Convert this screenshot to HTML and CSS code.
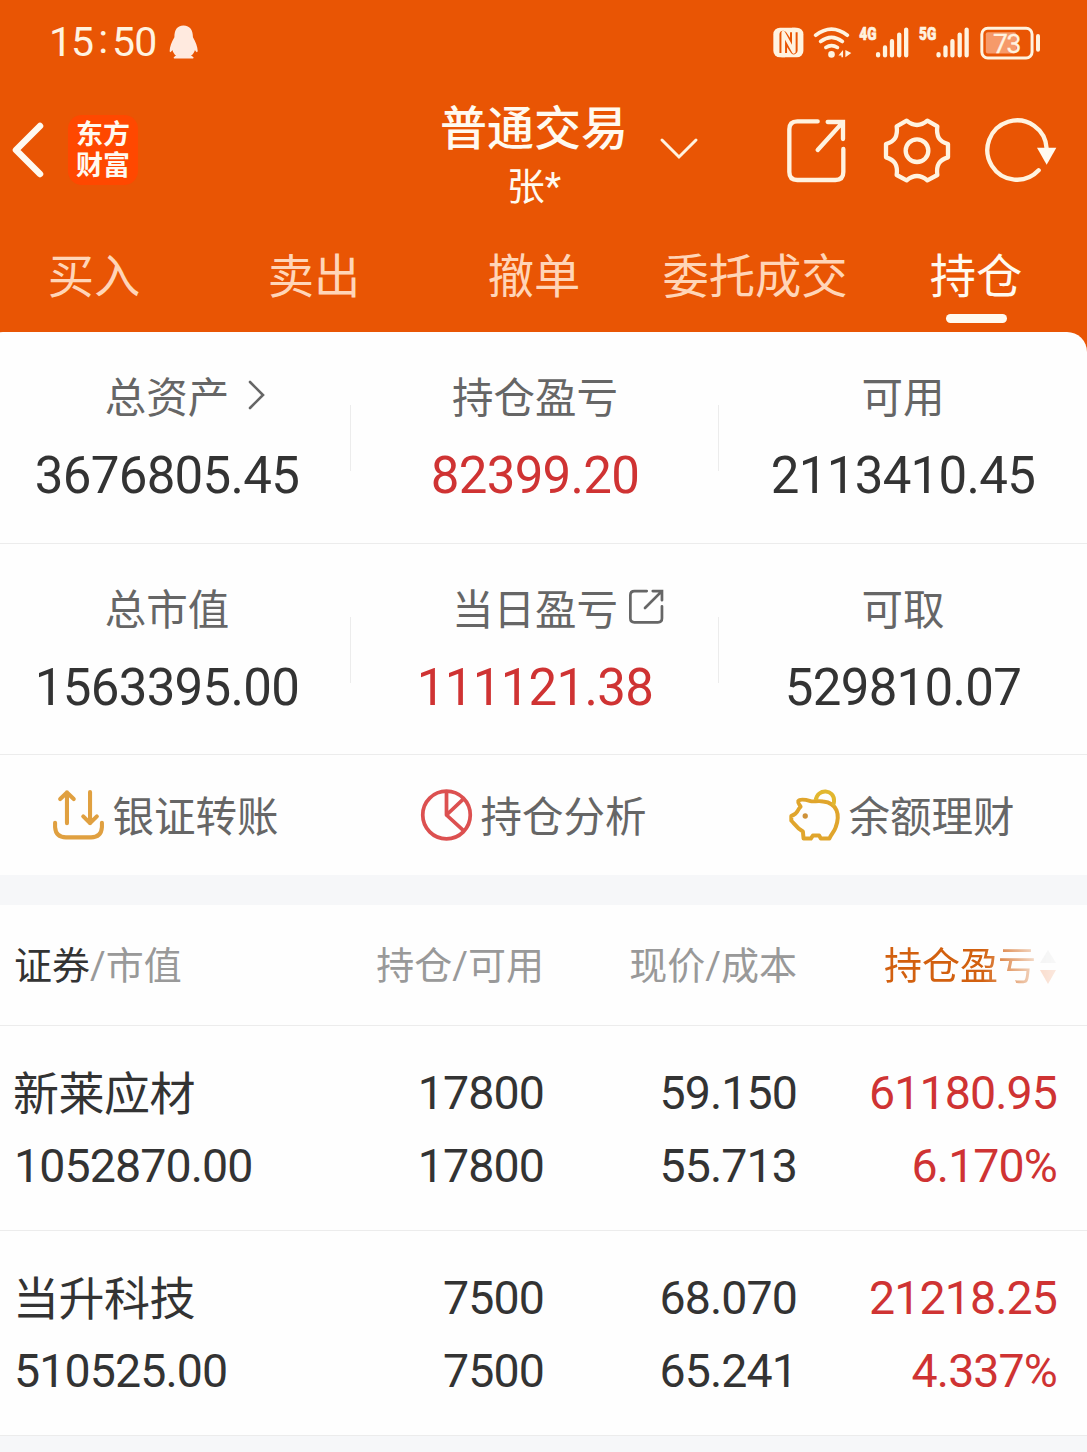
FILE: index.html
```html
<!DOCTYPE html>
<html lang="zh-CN">

<head>
    <meta charset="UTF-8">
    <meta name="viewport" content="width=device-width, initial-scale=1.0">
    <title>普通交易 - 持仓</title>
    <link rel="stylesheet" href="styles.css">
</head>

<body>

    <header class="header">
        <!-- 状态栏 -->
        <div class="status-bar">
            <span class="time">15<span class="colon">:</span>50</span>
            <svg class="qq" viewBox="506 76 86 100" fill="#ffeadf">
                <path d="M549 77C529 77 522 92 522 112C514 126 508 141 508 152C508 158 511 158 516 150C518 158 522 163 527 167C520 169 518 175 522 175H577C581 175 579 169 571 167C577 163 581 158 583 150C587 158 591 158 591 152C591 141 585 126 577 112C577 92 569 77 549 77Z"/>
            </svg>
            <svg class="status-icons" viewBox="90 70 820 115" fill="none" stroke="#fff3e0" stroke-linecap="round">
                <rect x="97" y="81" width="91" height="90" rx="20" fill="#fff3e0" stroke="none"/>
                <path d="M127 158V102L159 150V95" stroke="#e95504" stroke-width="23" stroke-linecap="butt" stroke-linejoin="round"/>
                <path d="M127 171V96L159 154V81" stroke-width="11" stroke-linecap="butt" stroke-linejoin="round"/>
                <g stroke-width="11">
                    <path d="M225 104Q273 67 321 104"/>
                    <path d="M240 123Q273 98 306 123"/>
                    <path d="M256 141Q273 130 291 141"/>
                </g>
                <circle cx="273" cy="162" r="10" fill="#fff3e0" stroke="none"/>
                <path d="M294 165L308 149V171H303V165ZM315 149V171L333 158Z" fill="#fff3e0" stroke="none"/>
                <g stroke-width="13">
                    <path d="M414 161V165M435 141V165M456 122V165M478 102V165M499 87V165"/>
                    <path d="M597 161V165M618 141V165M639 122V165M661 102V165M682 87V165"/>
                </g>
                <g class="net" fill="#fff3e0" stroke-width="2">
                    <text x="357" y="119" textLength="52" lengthAdjust="spacingAndGlyphs">4G</text>
                    <text x="538" y="119" textLength="52" lengthAdjust="spacingAndGlyphs">5G</text>
                </g>
                <rect x="728" y="83" width="152" height="90" rx="18" stroke-width="9"/>
                <rect x="740" y="95" width="92" height="64" rx="6" fill="#f69a6a" stroke="none"/>
                <path d="M898 106V148" stroke-width="12"/>
                <text class="battery" x="762" y="157" fill="#fff3e0" stroke-width="1">73</text>
            </svg>
        </div>

        <!-- 标题栏 -->
        <div class="title-bar">
            <svg class="back" viewBox="0 0 36 60" fill="none" stroke="#fffaf0" stroke-width="6.5" stroke-linecap="round" stroke-linejoin="round">
                <path d="M30 6L6 30L30 54"/>
            </svg>
            <div class="logo">东方<br>财富</div>
            <div class="account">
                <div class="account-type">普通交易</div>
                <div class="account-name">张*</div>
            </div>
            <svg class="down" viewBox="0 0 40 26" fill="none" stroke="#fff3e0" stroke-width="3" stroke-linecap="round">
                <path d="M3 3L20 20L37 3"/>
            </svg>
            <svg class="tool share" viewBox="80 81 183 201" fill="none" stroke="#fff3e0" stroke-width="13" stroke-linecap="round">
                <path d="M175 94H114Q90 94 90 118V246Q90 270 114 270H228Q252 270 252 246V177M205 96H251V147M250 97L175 180"/>
            </svg>
            <svg class="tool gear" viewBox="368 79 210 201" fill="none" stroke="#fff3e0" stroke-width="13" stroke-linejoin="round">
                <path d="M442 90Q473 116 504 90L534 107C530 138 540 152 566 160V200C540 208 530 222 534 253L504 269Q473 243 442 269L412 253C416 222 406 208 380 200V160C406 152 416 138 412 107Z"/>
                <circle cx="473" cy="180" r="34"/>
            </svg>
            <svg class="tool refresh" viewBox="674 79 222 201" fill="none" stroke="#fff3e0" stroke-width="13" stroke-linecap="round">
                <path d="M862 174A89 89 0 1 0 838 239"/>
                <path d="M833 171H891L862 222Z" fill="#fffaf0" stroke="none"/>
            </svg>
        </div>

        <!-- 导航标签 -->
        <nav class="tabs">
            <a class="tab">买入</a>
            <a class="tab">卖出</a>
            <a class="tab">撤单</a>
            <a class="tab tab-wide">委托成交</a>
            <a class="tab active">持仓</a>
        </nav>
    </header>

    <!-- 资产概览 -->
    <section class="summary">
        <div class="stat-row">
            <div class="stat">
                <div class="label">总资产
                    <svg class="arrow" viewBox="0 0 20 32" fill="none" stroke="#666" stroke-width="2.6" stroke-linecap="round">
                        <path d="M3 3L16 16L3 29"/>
                    </svg>
                </div>
                <div class="value">3676805.45</div>
            </div>
            <div class="stat">
                <div class="label">持仓盈亏</div>
                <div class="value red">82399.20</div>
            </div>
            <div class="stat">
                <div class="label">可用</div>
                <div class="value">2113410.45</div>
            </div>
        </div>
        <div class="stat-row">
            <div class="stat">
                <div class="label">总市值</div>
                <div class="value">1563395.00</div>
            </div>
            <div class="stat">
                <div class="label">当日盈亏
                    <svg class="export" viewBox="82 88 106 106" fill="none" stroke="#666" stroke-width="8" stroke-linecap="round">
                        <path d="M137 94H101Q89 94 89 106V174Q89 186 101 186H170Q182 186 182 174V139M155 94H182V121M181 95L132 144"/>
                    </svg>
                </div>
                <div class="value red">111121.38</div>
            </div>
            <div class="stat">
                <div class="label">可取</div>
                <div class="value">529810.07</div>
            </div>
        </div>
        <div class="actions">
            <a class="action">
                <svg viewBox="147 53 162 158" fill="none" stroke="#e0a040" stroke-width="12" stroke-linecap="round" stroke-linejoin="round">
                    <path d="M194 156V65M174 85L194 66L214 85M262 64V156M242 136L262 156L282 136M159 155V168Q161 198 191 198H265Q295 198 297 168V155"/>
                </svg>
                银证转账
            </a>
            <a class="action">
                <svg viewBox="1216 53 162 162" fill="none" stroke="#dc5050" stroke-width="11">
                    <circle cx="1297" cy="134" r="70"/>
                    <path d="M1297 64V134L1348 86M1297 134L1348 181" stroke-linejoin="round"/>
                </svg>
                持仓分析
            </a>
            <a class="action">
                <svg viewBox="559 679 166 168" fill="none" stroke="#e0a52c" stroke-width="12" stroke-linejoin="round">
                    <path d="M572 766V780C582 789 585 800 607 813L609 834H631L637 825H656L661 834H687C693 820 702 813 706 800C720 762 711 727 668 722C650 719 640 724 630 721C612 716 598 714 593 721C591 728 599 734 600 738C588 748 595 759 572 766Z"/>
                    <path d="M646 718C650 682 703 684 701 722Q701 729 697 734" stroke="#e2b72f"/>
                    <circle cx="614" cy="766" r="8" fill="#cf9238" stroke="none"/>
                </svg>
                余额理财
            </a>
        </div>
    </section>

    <!-- 持仓列表 -->
    <section class="holdings">
        <div class="row head">
            <div><b>证券</b>/市值</div>
            <div>持仓/可用</div>
            <div>现价/成本</div>
            <div class="sort">持仓盈亏
                <svg viewBox="0 0 18 34">
                    <path d="M1 13L9 0L17 13Z" fill="#ccc"/>
                    <path d="M1 20H17L9 34Z" fill="#e95504"/>
                </svg>
            </div>
        </div>
        <div class="row">
            <div><span class="name">新莱应材</span><br>1052870.00</div>
            <div>17800<br>17800</div>
            <div>59.150<br>55.713</div>
            <div class="red">61180.95<br>6.170%</div>
        </div>
        <div class="row">
            <div><span class="name">当升科技</span><br>510525.00</div>
            <div>7500<br>7500</div>
            <div>68.070<br>65.241</div>
            <div class="red">21218.25<br>4.337%</div>
        </div>
    </section>

</body>

</html>
```
FILE: styles.css
```css
/* 通用样式 */
* {
    box-sizing: border-box;
}

body {
    margin: 0;
    height: 1452px;
    overflow: hidden;
    background-color: #f6f7f9;
    color: #333;
    font-family: Roboto, "Noto Sans CJK SC", sans-serif;
}

svg {
    display: block;
    flex-shrink: 0;
}

/* 头部 */
.header {
    height: 356px;
    background-color: #e95504;
    color: #fffaf0;
}

.status-bar {
    display: flex;
    align-items: center;
    height: 84px;
    padding: 0 44px 0 49px;
}

.time {
    display: flex;
    width: 120px;
    font-size: 41px;
    letter-spacing: -1px;
    color: #fff3e0;
}

.colon {
    width: 19px;
    margin-top: -3px;
    text-align: center;
}

.qq {
    width: 29px;
    height: 34px;
}

.status-icons {
    width: 273px;
    height: 38px;
    margin: 1px 0 0 auto;
}

.net {
    font-size: 53px;
    font-weight: 900;
}

.battery {
    font-size: 80px;
    letter-spacing: -4px;
}

.title-bar {
    display: flex;
    align-items: center;
    height: 132px;
    padding-left: 10px;
}

.back {
    width: 36px;
    height: 60px;
}

.logo {
    width: 70px;
    height: 70px;
    margin-left: 22px;
    padding-top: 5px;
    border-radius: 14px;
    background-color: #ff4800;
    font-size: 27px;
    font-weight: 700;
    line-height: 31px;
    text-align: center;
}

.account {
    width: 190px;
    margin-left: 301px;
    padding-top: 11px;
    text-align: center;
    font-weight: 500;
}

.account-type {
    font-size: 47px;
    line-height: 62px;
}

.account-name {
    font-size: 38px;
    line-height: 54px;
    font-weight: 400;
}

.down {
    width: 40px;
    height: 26px;
    margin-left: 30px;
}

.tool {
    height: 67px;
}

.share {
    width: 61px;
    margin-left: 87px;
}

.gear {
    width: 70px;
    margin-left: 35px;
}

.refresh {
    width: 74px;
    margin-left: 32px;
}

.tabs {
    display: flex;
    height: 116px;
    margin-left: -16px;
}

.tab {
    position: relative;
    width: 220px;
    font-size: 46.3px;
    line-height: 122px;
    text-align: center;
    color: #ffd5b8;
}

.tab-wide {
    width: 222px;
}

.tab.active {
    color: #fffaf0;
}

.tab.active::after {
    content: "";
    position: absolute;
    left: 80px;
    top: 98px;
    width: 61px;
    height: 9px;
    border-radius: 5px;
    background-color: #fffaf0;
}

/* 资产卡片，左侧略超出屏幕 */
.summary {
    position: relative;
    width: 1104px;
    height: 543px;
    margin: -24px 0 0 -17px;
    border-radius: 20px 20px 0 0;
    background-color: #fefefe;
}

.stat-row {
    display: grid;
    grid-template-columns: repeat(3, 368px);
    height: 212px;
    border-bottom: 1px solid #ececec;
}

.stat-row + .stat-row {
    height: 211px;
}

.stat {
    padding-top: 32px;
    text-align: center;
    background: linear-gradient(#ececec, #ececec) no-repeat right 73px / 1px 66px;
}

.stat:last-child {
    background: none;
}

.label {
    display: flex;
    align-items: center;
    justify-content: center;
    height: 62px;
    font-size: 41.5px;
    color: #666;
}

.arrow {
    width: 20px;
    height: 32px;
    margin: 0 -38px 0 18px;
}

.export {
    width: 36px;
    height: 36px;
    margin: 0 -46px 0 10px;
}

.value {
    font-size: 51px;
    letter-spacing: -0.7px;
    line-height: 100px;
}

.red {
    color: #cf3333;
}

.actions {
    display: flex;
}

.action {
    display: flex;
    align-items: center;
    justify-content: center;
    gap: 6px;
    width: 364px;
    height: 118px;
    margin-right: 4px;
    font-size: 41.5px;
    color: #666;
}

.action svg {
    width: 55px;
    height: 56px;
    margin-top: 2px;
}

/* 持仓列表 */
.holdings {
    margin-top: 30px;
}

.row {
    display: grid;
    grid-template-columns: 275px 254px 253px 260px;
    height: 205px;
    padding: 31px 0 0 15px;
    border-bottom: 1px solid #ececec;
    background-color: #fefefe;
    font-size: 46.5px;
    letter-spacing: -0.9px;
    line-height: 73px;
    text-align: right;
}

.row > div:first-child {
    margin-left: -1px;
    text-align: left;
}

.name {
    position: relative;
    top: 1px;
    margin-left: -1px;
    font-size: 46px;
    letter-spacing: -0.5px;
    line-height: 1;
}

.head {
    height: 121px;
    padding-top: 25px;
    font-size: 38px;
    letter-spacing: 0;
    color: #999;
}

.head b {
    font-weight: 400;
    color: #333;
}

.sort {
    display: flex;
    align-items: center;
    justify-content: flex-end;
    gap: 3px;
    height: 73px;
    color: #d2600f;
    mask-image: linear-gradient(to right, #000 185px, rgba(0, 0, 0, 0.2) 240px, rgba(0, 0, 0, 0.12) 260px);
}

.sort svg {
    width: 18px;
    height: 34px;
}
```
